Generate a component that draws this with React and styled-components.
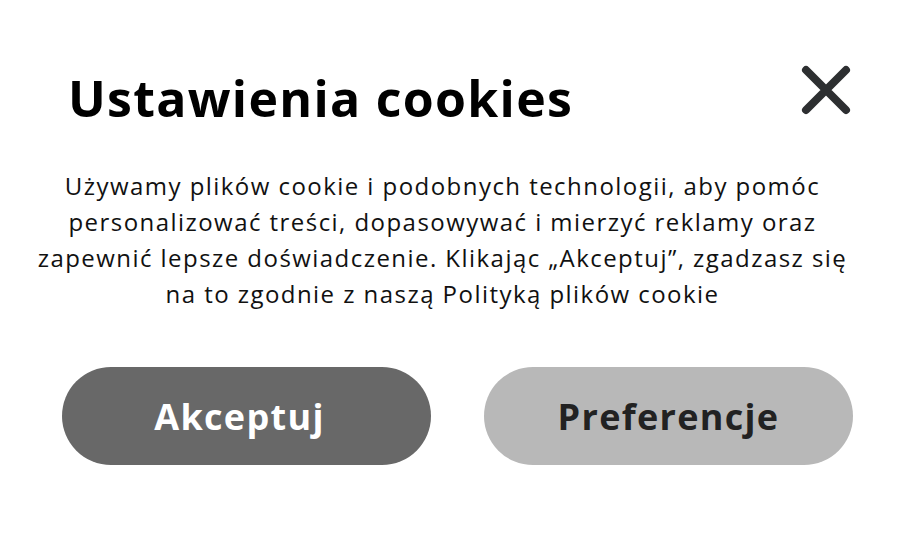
import React from "react"
import styled, { createGlobalStyle } from "styled-components"

const GlobalStyle = createGlobalStyle`
  html, body {
    margin: 0;
    padding: 0;
    background: #ffffff;
  }
  body {
    font-family: "Open Sans", "Noto Sans", sans-serif;
  }
`

const Dialog = styled.div`
  width: 923px;
  height: 559px;
  box-sizing: border-box;
  padding: 58px 62px 0 40px;
  display: flex;
  flex-direction: column;
`

const Header = styled.div`
  display: flex;
  align-items: center;
  justify-content: space-between;
  padding-left: 28px;
  padding-right: 10px;
`

const Title = styled.h1`
  margin: 0;
  font-size: 50px;
  font-weight: 700;
  letter-spacing: 1.3px;
  color: #000;
  line-height: 80px;
`

const CloseButton = styled.button`
  border: 0;
  background: none;
  padding: 0;
  margin-bottom: 16px;
  width: 50px;
  height: 50px;
  cursor: pointer;
  display: flex;
`

const Text = styled.p`
  margin: 30px 0 0 -16px;
  font-size: 24px;
  letter-spacing: 1.45px;
  line-height: 36px;
  text-align: center;
  white-space: nowrap;
  color: #111;
`

const Actions = styled.div`
  display: flex;
  gap: 53px;
  margin-top: 55px;
  padding-left: 22px;
`

const Button = styled.button`
  width: 369px;
  height: 98px;
  padding: 0 ${p => (p.$primary ? "14px" : "0")} 0 0;
  border: 0;
  border-radius: 49px;
  font-family: inherit;
  font-size: 36px;
  font-weight: 700;
  letter-spacing: 1.3px;
  background: ${p => (p.$primary ? "#686868" : "#b8b8b8")};
  color: ${p => (p.$primary ? "#ffffff" : "#222222")};
  cursor: pointer;
`

const CloseIcon = () => (
  <svg width="50" height="50" viewBox="0 0 50 50">
    <path
      d="M5 5 L45 45 M45 5 L5 45"
      stroke="#2d2f31"
      strokeWidth="8"
      strokeLinecap="round"
      fill="none"
    />
  </svg>
)

export default function App() {
  return (
    <>
      <GlobalStyle />
      <Dialog>
        <Header>
          <Title>Ustawienia cookies</Title>
          <CloseButton aria-label="Zamknij">
            <CloseIcon />
          </CloseButton>
        </Header>
        <Text>
          Używamy plików cookie i podobnych technologii, aby pomóc
          <br />
          personalizować treści, dopasowywać i mierzyć reklamy oraz
          <br />
          zapewnić lepsze doświadczenie. Klikając „Akceptuj”, zgadzasz się
          <br />
          na to zgodnie z naszą Polityką plików cookie
        </Text>
        <Actions>
          <Button $primary>Akceptuj</Button>
          <Button>Preferencje</Button>
        </Actions>
      </Dialog>
    </>
  )
}
